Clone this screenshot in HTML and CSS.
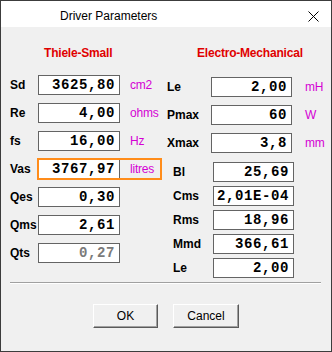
FILE: index.html
```html
<!DOCTYPE html>
<html>
<head>
<meta charset="utf-8">
<link rel="stylesheet" href="styles.css">
</head>
<body>
<div class="window">
  <div class="titlebar">
    <span class="title">Driver Parameters</span>
    <svg class="close" width="11" height="11" viewBox="0 0 11 11"><path d="M0.5 0.5 L10.5 10.5 M10.5 0.5 L0.5 10.5" stroke="#000" stroke-width="1" fill="none"/></svg>
  </div>
  <div class="panel">
    <div class="col left">
      <div class="heading">Thiele-Small</div>
      <div class="rows ts">
        <div class="row"><span class="lbl">Sd</span><span class="box">3625,80</span><span class="unit">cm2</span></div>
        <div class="row"><span class="lbl">Re</span><span class="box">4,00</span><span class="unit">ohms</span></div>
        <div class="row"><span class="lbl">fs</span><span class="box">16,00</span><span class="unit">Hz</span></div>
        <div class="row"><span class="lbl">Vas</span><span class="focus"><span class="box">3767,97</span><span class="unit">litres</span></span></div>
        <div class="row"><span class="lbl">Qes</span><span class="box">0,30</span></div>
        <div class="row"><span class="lbl">Qms</span><span class="box">2,61</span></div>
        <div class="row"><span class="lbl">Qts</span><span class="box disabled">0,27</span></div>
      </div>
    </div>
    <div class="col right">
      <div class="heading">Electro-Mechanical</div>
      <div class="rows em-top">
        <div class="row"><span class="lbl">Le</span><span class="box">2,00</span><span class="unit">mH</span></div>
        <div class="row"><span class="lbl">Pmax</span><span class="box">60</span><span class="unit">W</span></div>
        <div class="row"><span class="lbl">Xmax</span><span class="box">3,8</span><span class="unit">mm</span></div>
      </div>
      <div class="rows em-bottom">
        <div class="row"><span class="lbl">Bl</span><span class="box">25,69</span></div>
        <div class="row"><span class="lbl">Cms</span><span class="box">2,01E-04</span></div>
        <div class="row"><span class="lbl">Rms</span><span class="box">18,96</span></div>
        <div class="row"><span class="lbl">Mmd</span><span class="box">366,61</span></div>
        <div class="row"><span class="lbl">Le</span><span class="box">2,00</span></div>
      </div>
    </div>
  </div>
  <div class="separator"></div>
  <div class="buttons">
    <button class="btn ok">OK</button>
    <button class="btn cancel">Cancel</button>
  </div>
</div>
</body>
</html>
```
FILE: styles.css
```css
html, body {
  margin: 0;
  padding: 0;
  background: #f0f0f0;
}
.window {
  width: 332px;
  height: 352px;
  box-sizing: border-box;
  border: 1px solid #3c3c3c;
  background: #f0f0f0;
  display: flex;
  flex-direction: column;
  font-family: "Liberation Sans", Arial, sans-serif;
}
.titlebar {
  height: 26px;
  background: #fff;
  display: flex;
  align-items: center;
  padding-left: 59px;
  padding-right: 12px;
}
.title {
  font-size: 12px;
  color: #000;
  margin-top: 3px;
}
.close {
  margin-left: auto;
  margin-top: 4px;
}
.panel {
  display: grid;
  grid-template-columns: 157px 1fr;
  padding-left: 9px;
}
.heading {
  color: #e00000;
  font-weight: bold;
  font-size: 12px;
  line-height: 14px;
  margin-top: 19px;
  letter-spacing: -0.2px;
}
.left .heading { padding-left: 34px; }
.right .heading { padding-left: 30px; }
.rows {
  display: flex;
  flex-direction: column;
}
.ts { margin-top: 15px; gap: 8px; }
.em-top { margin-top: 17px; gap: 8px; }
.em-bottom { margin-top: 9px; gap: 4px; padding-left: 6px; }
.row {
  display: flex;
  align-items: center;
  height: 20px;
}
.lbl {
  font-weight: bold;
  font-size: 12px;
  color: #000;
  width: 28px;
  flex: none;
}
.right .em-top .lbl { width: 44px; }
.right .em-bottom .lbl { width: 40px; }
.box {
  box-sizing: border-box;
  width: 82px;
  height: 20px;
  border: 1px solid #646464;
  background: #fff;
  font-family: "Liberation Mono", "Courier New", monospace;
  font-weight: bold;
  font-size: 14px;
  letter-spacing: 0.6px;
  line-height: 18px;
  text-align: right;
  padding-right: 4px;
  color: #000;
  flex: none;
}
.right .box { width: 81px; }
.box.disabled { color: #7a7a7a; }
.unit {
  color: #d400d4;
  font-size: 12px;
  margin-left: 10px;
  letter-spacing: -0.2px;
}
.right .unit { margin-left: 13px; }
.focus {
  position: relative;
  display: flex;
  align-items: center;
  width: 123px;
  height: 20px;
}
.focus::after {
  content: "";
  position: absolute;
  left: -1px;
  top: -1px;
  right: -1px;
  bottom: -1px;
  border: 2px solid #ff8c1a;
}
.separator {
  margin: 4px 10px 0 9px;
  border-top: 1px solid #a0a0a0;
  border-bottom: 1px solid #fff;
}
.buttons {
  display: flex;
  justify-content: center;
  gap: 15px;
  margin-top: 20px;
}
.btn {
  box-sizing: border-box;
  height: 24px;
  background: #f0f0f0;
  border: 1px solid;
  border-color: #fff #5a5a5a #5a5a5a #fff;
  box-shadow: inset -1px -1px 0 #a0a0a0;
  font-family: "Liberation Sans", Arial, sans-serif;
  font-size: 12px;
  color: #000;
  padding: 0;
}
.ok { width: 65px; }
.cancel { width: 66px; }
```
